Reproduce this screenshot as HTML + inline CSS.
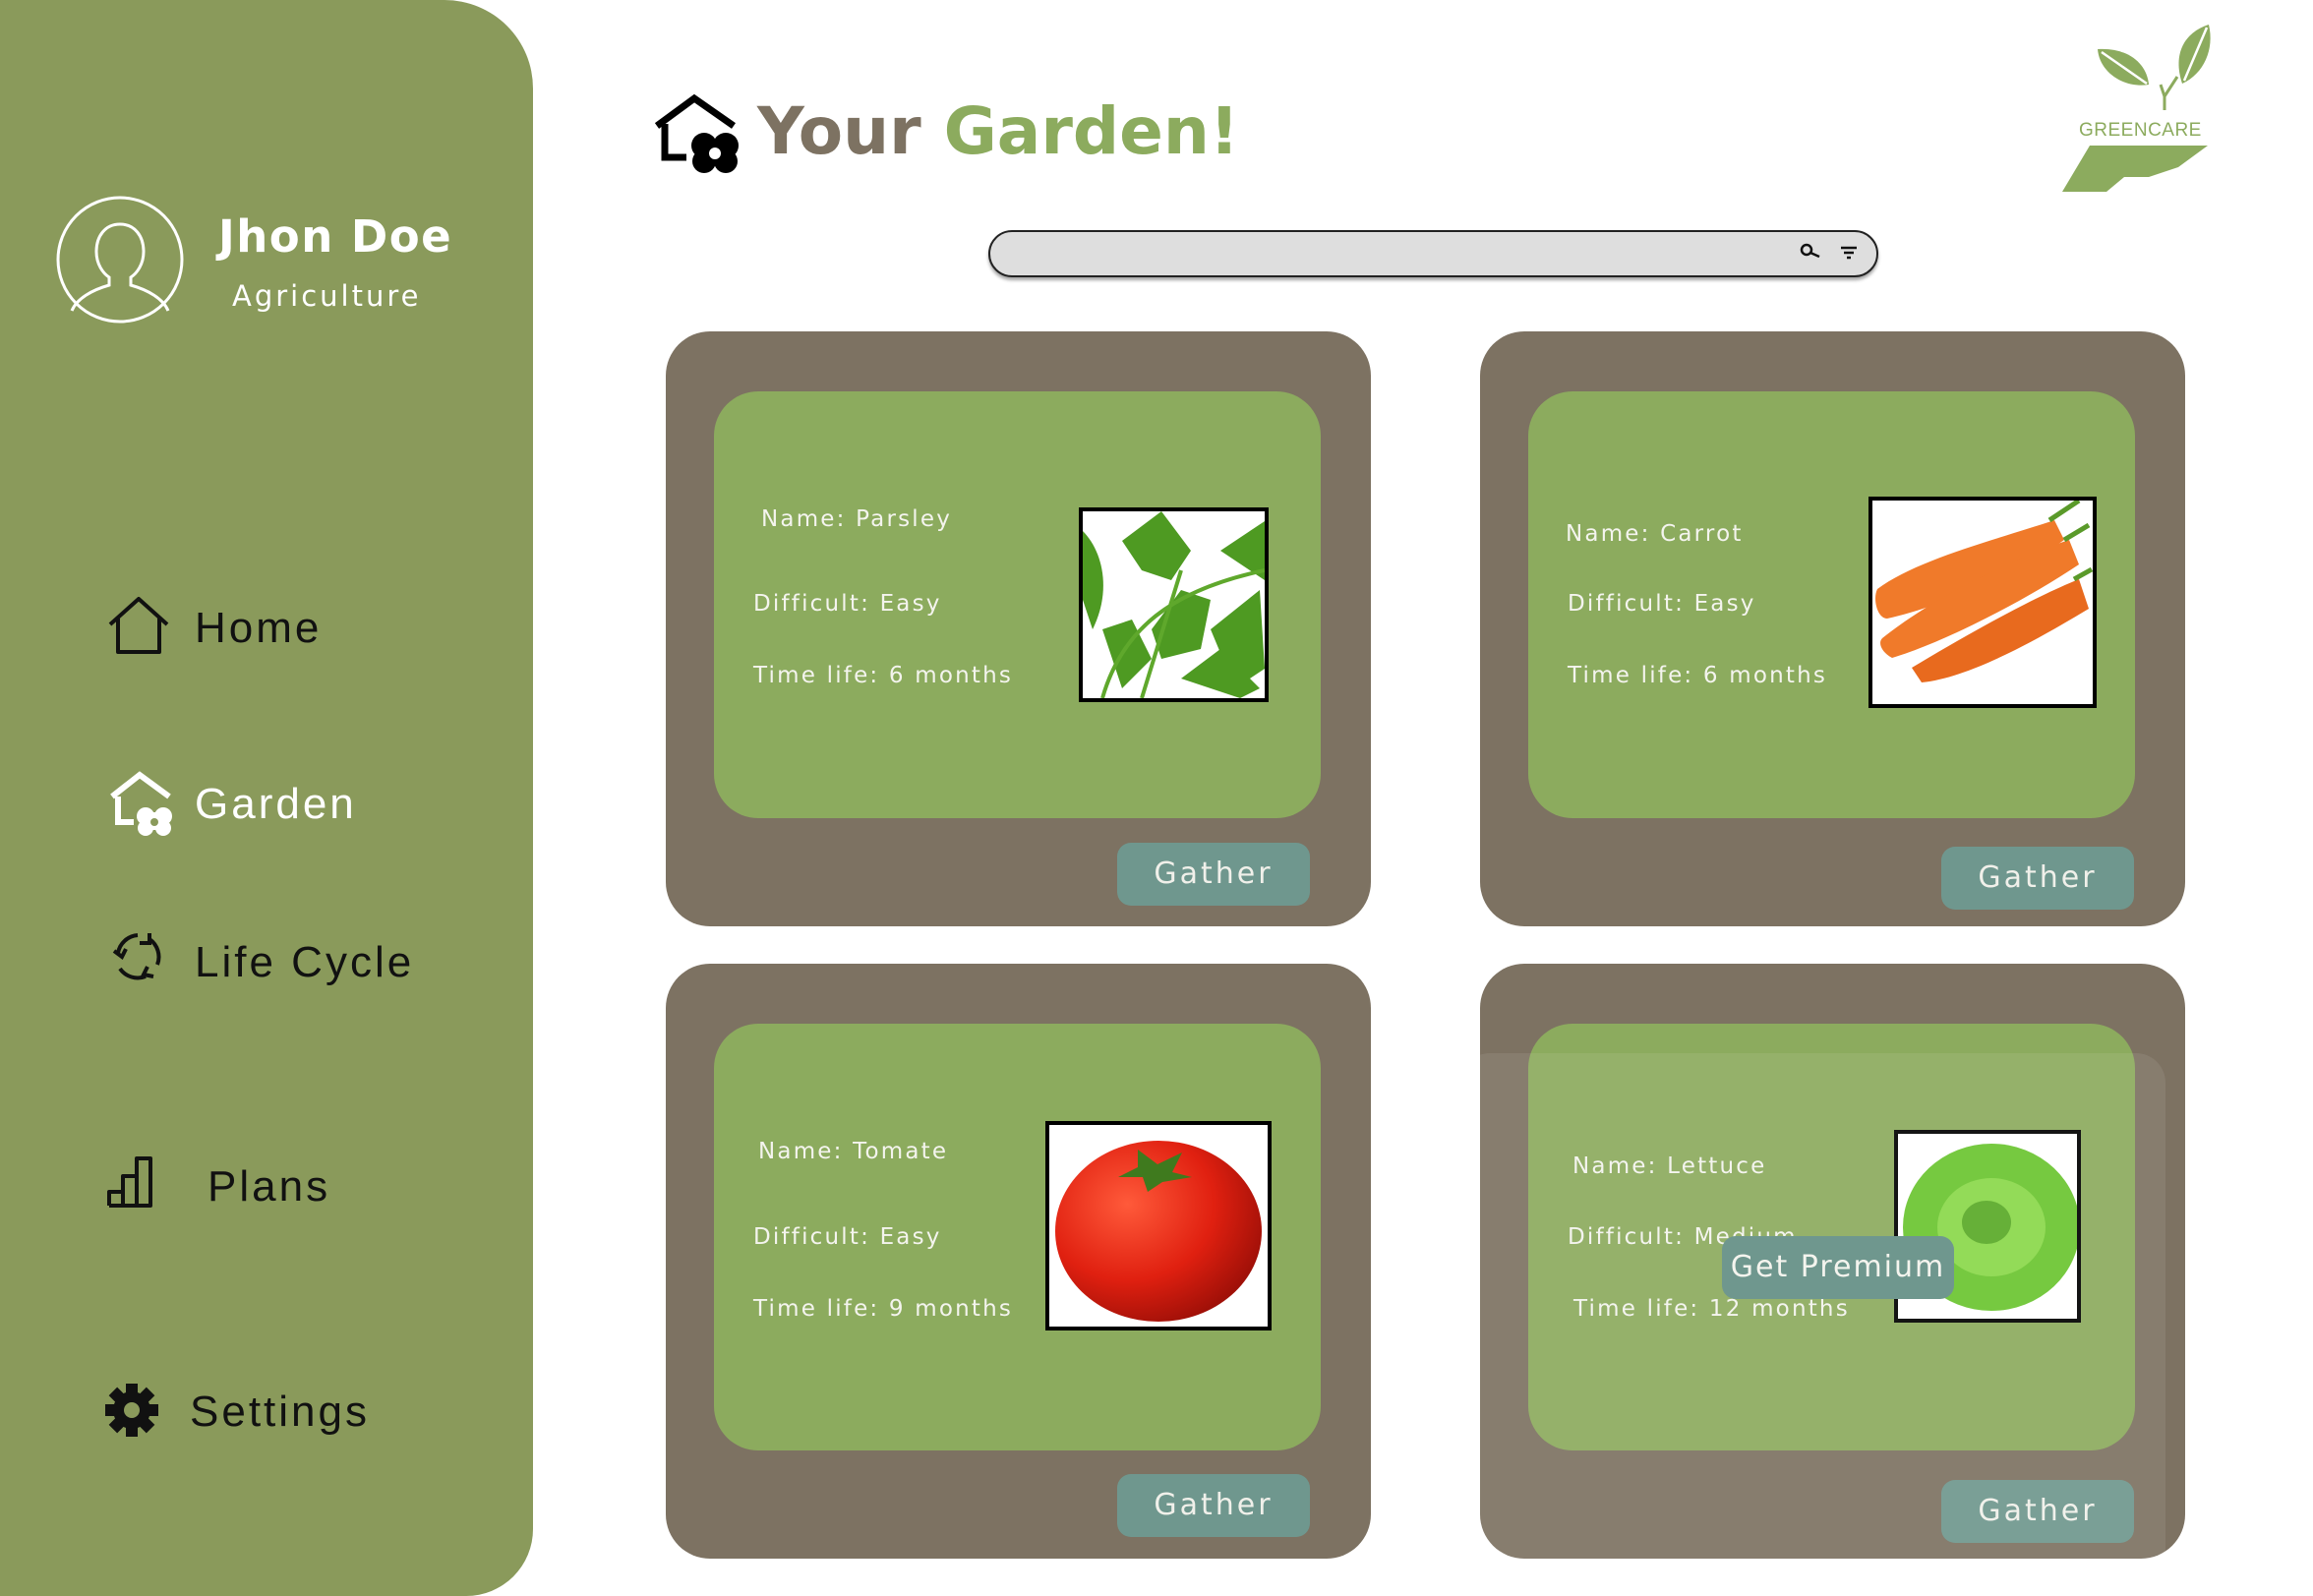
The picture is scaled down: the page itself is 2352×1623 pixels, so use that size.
<!DOCTYPE html>
<html><head><meta charset="utf-8"><style>
*{margin:0;padding:0;box-sizing:border-box}
body{width:2352px;height:1623px;background:#fff;position:relative;overflow:hidden;font-family:"Liberation Sans","DejaVu Sans",sans-serif}
.abs{position:absolute}
#side{left:0;top:0;width:542px;height:1623px;background:#8a9a5b;border-radius:0 90px 68px 0}
.nav{position:absolute;font-size:44px;letter-spacing:3px;color:#111;line-height:1}
.card{position:absolute;width:717px;height:605px;background:#7d7262;border-radius:45px}
.inner{position:absolute;left:49px;top:61px;width:617px;height:434px;background:#8cab5e;border-radius:45px}
.t{position:absolute;color:#f4f4ee;font-size:23px;letter-spacing:2.2px;line-height:1;font-family:"DejaVu Sans",sans-serif}
.btn{position:absolute;width:196px;height:64px;background:#6f978e;border-radius:14px;color:#f0f0ea;font-size:30px;letter-spacing:3px;text-align:center;line-height:64px;font-family:"DejaVu Sans",sans-serif}
.img{position:absolute;border:4px solid #000;background:#fff;overflow:hidden}
</style></head><body>
<div id="side" class="abs"></div>
<svg class="abs" style="left:56px;top:198px" width="132" height="132" viewBox="0 0 132 132"><circle cx="66" cy="66" r="63" fill="none" stroke="#fff" stroke-width="3"/><path d="M66 30c-15 0-24 12-24 28 0 13 7 22 13 26v8c-18 5-33 14-38 26M66 30c15 0 24 12 24 28 0 13-7 22-13 26v8c18 5 33 14 38 26" fill="none" stroke="#fff" stroke-width="3"/></svg>
<div class="abs" style="left:222px;top:214px;font-size:45px;color:#fff;letter-spacing:1.5px;font-weight:bold;font-family:'DejaVu Sans',sans-serif">Jhon Doe</div>
<div class="abs" style="left:236px;top:284px;font-size:29px;color:#fff;letter-spacing:3px;font-family:'DejaVu Sans',sans-serif">Agriculture</div>

<svg class="abs" style="left:108px;top:605px" width="66" height="64" viewBox="0 0 66 64"><path d="M4 30L33 4l29 26M12 24v34h42V24" fill="none" stroke="#111" stroke-width="4" stroke-linejoin="round"/></svg>
<div class="nav" style="left:198px;top:617px">Home</div>

<svg class="abs" style="left:110px;top:784px" width="66" height="66" viewBox="0 0 66 66"><path d="M4 26L32 4l30 22" fill="none" stroke="#fff" stroke-width="6"/><path d="M10 26v26h16" fill="none" stroke="#fff" stroke-width="6"/><g fill="#fff"><circle cx="38" cy="46" r="9"/><circle cx="56" cy="46" r="9"/><circle cx="38" cy="58" r="8"/><circle cx="56" cy="58" r="8"/><rect x="36" y="42" width="22" height="18"/></g><circle cx="47" cy="52" r="4" fill="#8a9a5b"/></svg>
<div class="nav" style="left:198px;top:796px;color:#fff">Garden</div>

<svg class="abs" style="left:112px;top:945px" width="56" height="56" viewBox="0 0 56 56"><path d="M40 10A22 22 0 0 1 48 36M36 48A22 22 0 0 1 10 40M8 24A22 22 0 0 1 28 6" fill="none" stroke="#111" stroke-width="4"/><path d="M40 4v10h-10M44 48l-10-2 4-8M4 22l8 6 4-8" fill="none" stroke="#111" stroke-width="4"/></svg>
<div class="nav" style="left:198px;top:957px">Life Cycle</div>

<svg class="abs" style="left:108px;top:1174px" width="52" height="56" viewBox="0 0 52 56"><path d="M3 52V38h14V52M17 52V22h14v30M31 52V4h14v48H3" fill="none" stroke="#111" stroke-width="4" stroke-linejoin="round"/></svg>
<div class="nav" style="left:211px;top:1185px">Plans</div>

<svg class="abs" style="left:106px;top:1406px" width="56" height="56" viewBox="0 0 56 56"><g fill="#111" transform="translate(28 28)"><circle r="19"/><g id="tt"><rect x="-6" y="-27" width="12" height="12"/></g><use href="#tt" transform="rotate(45)"/><use href="#tt" transform="rotate(90)"/><use href="#tt" transform="rotate(135)"/><use href="#tt" transform="rotate(180)"/><use href="#tt" transform="rotate(225)"/><use href="#tt" transform="rotate(270)"/><use href="#tt" transform="rotate(315)"/></g><circle cx="28" cy="28" r="8" fill="#8a9a5b"/></svg>
<div class="nav" style="left:193px;top:1414px">Settings</div>

<!-- header -->
<svg class="abs" style="left:664px;top:94px" width="88" height="82" viewBox="0 0 88 82"><path d="M4 34L42 6l40 28" fill="none" stroke="#000" stroke-width="7"/><path d="M12 32v34h22" fill="none" stroke="#000" stroke-width="7"/><g fill="#000"><circle cx="52" cy="54" r="13"/><circle cx="74" cy="54" r="13"/><circle cx="52" cy="70" r="12"/><circle cx="74" cy="70" r="12"/><rect x="50" y="50" width="26" height="22"/></g><circle cx="63" cy="62" r="6" fill="#fff"/></svg>
<div class="abs" style="left:770px;top:94px;font-size:66px;font-weight:bold;letter-spacing:0px;font-family:'DejaVu Sans',sans-serif;line-height:80px"><span style="color:#7d7262">Your</span> <span style="color:#8cab5e">Garden!</span></div>

<svg class="abs" style="left:2095px;top:20px" width="160" height="180" viewBox="2095 20 160 180"><g fill="#8cab5e"><path d="M2133 50c30-2 50 14 52 36-25 4-50-12-52-36z"/><path d="M2246 25c-25 8-37 30-27 60 22-10 33-35 27-60z"/><path d="M2197 86l4 12v14M2214 78l-13 20" stroke="#8cab5e" stroke-width="3" fill="none"/><path d="M2097 195l28-47h120l-30 22-30 10h-25l-18 15z"/></g><path d="M2137 53l46 32M2244 28l-23 54" stroke="#fff" stroke-width="2.5"/><text x="2114" y="138" font-size="19" fill="#8cab5e" font-family="Liberation Sans,sans-serif" letter-spacing="0.5">GREENCARE</text></svg>

<div class="abs" style="left:1005px;top:234px;width:905px;height:48px;background:#dedede;border:2px solid #222;border-radius:24px;box-shadow:0 3px 3px rgba(0,0,0,.35)"></div>
<svg class="abs" style="left:1830px;top:244px" width="60" height="26" viewBox="0 0 60 26"><circle cx="7" cy="10" r="5" fill="none" stroke="#111" stroke-width="2.5"/><path d="M11 13l9 4" stroke="#111" stroke-width="2.5"/><path d="M42 8h16M45 13h10M48 18h4" stroke="#111" stroke-width="2.5"/></svg>

<!-- card 1 -->
<div class="card" style="left:677px;top:337px"><div class="inner"></div>
<div class="t" style="left:97px;top:180px">Name: Parsley</div>
<div class="t" style="left:89px;top:266px">Difficult: Easy</div>
<div class="t" style="left:89px;top:339px">Time life: 6 months</div>
<div class="img" style="left:420px;top:179px;width:193px;height:198px"><svg width="185" height="190" viewBox="0 0 185 190"><g fill="#4e9a22"><path d="M0 20c20 20 30 60 10 100L0 90z"/><path d="M40 30l40-30 30 40-20 30-30-10z"/><path d="M70 120l30-40 30 10-10 50-40 10z"/><path d="M130 120l50-40 5 80-30 20z"/><path d="M20 120l30-10 20 40-30 30z"/><path d="M140 40l45-30v60z"/><path d="M100 170l40-30 40 40-20 10z"/></g><path d="M20 190C40 120 90 80 185 60M60 190L100 60" stroke="#5fa82c" stroke-width="4" fill="none"/></svg></div>
<div class="btn" style="left:459px;top:520px">Gather</div></div>

<!-- card 2 -->
<div class="card" style="left:1505px;top:337px"><div class="inner"></div>
<div class="t" style="left:87px;top:195px">Name: Carrot</div>
<div class="t" style="left:89px;top:266px">Difficult: Easy</div>
<div class="t" style="left:89px;top:339px">Time life: 6 months</div>
<div class="img" style="left:395px;top:168px;width:232px;height:215px"><svg width="224" height="207" viewBox="0 0 224 207"><g fill="#f07a2a"><path d="M5 90c40-30 120-50 180-70l10 20C140 80 60 110 15 120c-10 0-15-20-10-30z"/><path d="M10 140c50-40 130-80 190-100l10 25c-60 40-140 80-190 95-10-5-15-15-10-20z"/><path d="M40 170c50-30 120-70 170-90l10 30c-50 30-120 70-170 75z" fill="#e86a1e"/></g><path d="M180 20l30-20M195 40l25-15M205 80l18-10" stroke="#5a9a2a" stroke-width="5"/></svg></div>
<div class="btn" style="left:469px;top:524px">Gather</div></div>

<!-- card 3 -->
<div class="card" style="left:677px;top:980px"><div class="inner"></div>
<div class="t" style="left:94px;top:180px">Name: Tomate</div>
<div class="t" style="left:89px;top:267px">Difficult: Easy</div>
<div class="t" style="left:89px;top:340px">Time life: 9 months</div>
<div class="img" style="left:386px;top:160px;width:230px;height:213px"><svg width="222" height="205" viewBox="0 0 222 205"><defs><radialGradient id="tg" cx=".35" cy=".35" r=".7"><stop offset="0" stop-color="#ff5a3a"/><stop offset=".6" stop-color="#e02010"/><stop offset="1" stop-color="#a01008"/></radialGradient></defs><ellipse cx="111" cy="108" rx="105" ry="92" fill="url(#tg)"/><path d="M90 25l20 15 25-12-10 20 20 5-30 5-15 10-5-15-25 0 20-10z" fill="#3f7a1e"/></svg></div>
<div class="btn" style="left:459px;top:519px">Gather</div></div>

<!-- card 4 -->
<div class="card" style="left:1505px;top:980px"><div class="inner"></div>
<div class="t" style="left:94px;top:195px">Name: Lettuce</div>
<div class="t" style="left:89px;top:267px">Difficult: Medium</div>
<div class="t" style="left:95px;top:340px">Time life: 12 months</div>
<div class="img" style="left:421px;top:169px;width:190px;height:196px"><svg width="182" height="188" viewBox="0 0 182 188"><ellipse cx="95" cy="95" rx="90" ry="85" fill="#6bc530"/><ellipse cx="95" cy="95" rx="55" ry="50" fill="#8ad84a"/><ellipse cx="90" cy="90" rx="25" ry="22" fill="#5aaa28"/></svg></div>
<div class="btn" style="left:469px;top:525px">Gather</div></div>

<div class="abs" style="left:1485px;top:1071px;width:717px;height:552px;background:rgba(255,255,255,.08);border-radius:30px 30px 0 0"></div>
<div class="abs" style="left:1751px;top:1257px;width:236px;height:64px;background:#6f978e;border-radius:14px;color:#f4f4ee;font-size:30px;letter-spacing:2px;line-height:64px;text-align:center;font-family:'DejaVu Sans',sans-serif">Get Premium</div>
</body></html>
